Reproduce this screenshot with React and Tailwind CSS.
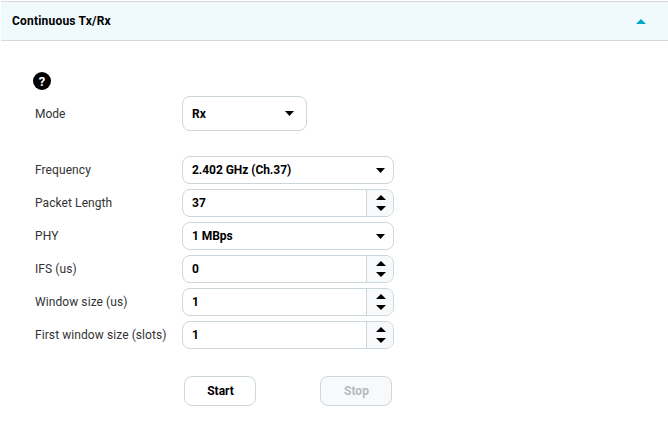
const Caret = ({ up, width = 9, className = '' }) => (
  <svg width={width} height="5" viewBox="0 0 10 5" preserveAspectRatio="none" className={className}>
    <path d={up ? 'M5 0 L10 5 H0 Z' : 'M0 0 H10 L5 5 Z'} fill="currentColor" />
  </svg>
);

const Field = ({ label, children }) => (
  <div className="flex h-7 items-center">
    <label className="w-[147px] shrink-0 text-xs tracking-[0.08px] text-[#333]">{label}</label>
    {children}
  </div>
);

const Select = ({ value }) => (
  <div className="flex h-7 w-[212px] items-center justify-between rounded-lg border border-[#ccd6dd] bg-white pl-[9px] pr-2 text-xs font-bold tracking-[-0.05px] text-black">
    <span>{value}</span>
    <Caret className="text-black" />
  </div>
);

const Spinner = ({ value }) => (
  <div className="flex h-7 w-[212px] overflow-hidden rounded-lg border border-[#ccd6dd] bg-white text-xs font-bold text-black">
    <div className="flex flex-1 items-center pl-[9px]">{value}</div>
    <div className="flex w-[27px] flex-col items-center justify-center gap-[6px] border-l border-[#ccd6dd] bg-[#f8f9fa] pl-px">
      <Caret up width={10} />
      <Caret width={10} />
    </div>
  </div>
);

export default function App() {
  return (
    <div className="h-[442px] w-[668px] bg-white pt-px font-['Roboto',Arial,sans-serif]">
      <div className="ml-px flex h-10 items-center justify-between border-y border-[#d5d9da] bg-[#f0f9fb] pl-[11px] pr-[22px]">
        <span className="text-xs font-bold tracking-[0.2px] text-black">Continuous Tx/Rx</span>
        <Caret up width={10} className="text-[#00a5cc]" />
      </div>

      <div className="pl-[35px]">
        <div className="-ml-0.5 mt-[31px] flex h-[18px] w-[18px] items-center justify-center rounded-full bg-black text-[13px] font-bold leading-none text-white">?</div>

        <div className="mt-[6px] flex h-[35px] items-center">
          <label className="w-[147px] shrink-0 text-xs text-[#333]">Mode</label>
          <div className="flex h-[35px] w-[125px] items-center justify-between rounded-lg border border-[#ccd6dd] bg-white pl-[9px] pr-3 text-xs font-bold text-black">
            <span>Rx</span>
            <Caret />
          </div>
        </div>

        <div className="mt-[25px] flex flex-col gap-[5px]">
          <Field label="Frequency"><Select value="2.402 GHz (Ch.37)" /></Field>
          <Field label="Packet Length"><Spinner value="37" /></Field>
          <Field label="PHY"><Select value="1 MBps" /></Field>
          <Field label="IFS (us)"><Spinner value="0" /></Field>
          <Field label="Window size (us)"><Spinner value="1" /></Field>
          <Field label="First window size (slots)"><Spinner value="1" /></Field>
        </div>

        <div className="ml-[149px] mt-[27px] flex w-[208px] justify-between">
          <button className="h-[30px] w-[72px] rounded-lg border border-[#ccd6dd] bg-white pl-px text-xs font-bold text-black">Start</button>
          <button disabled className="h-[30px] w-[72px] rounded-lg border border-[#ccd6dd] bg-[#f8f9fa] pl-px text-xs font-bold text-[#b3bcc1]">Stop</button>
        </div>
      </div>
    </div>
  );
}
